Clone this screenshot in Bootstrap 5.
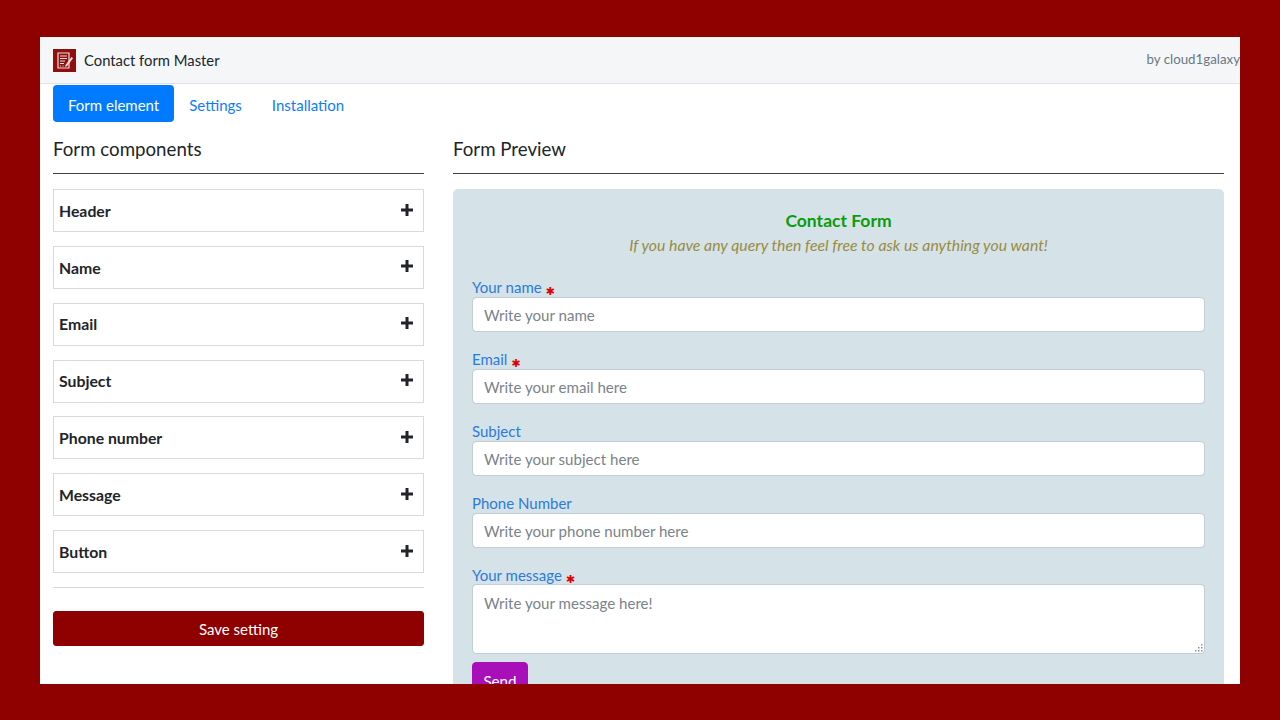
<!DOCTYPE html>
<html lang="en">
<head>
  <meta charset="UTF-8" />
  <meta name="viewport" content="width=device-width, initial-scale=1.0"/>
  <title>Contact form Master</title>
  <link href="https://cdn.jsdelivr.net/npm/bootstrap@5.3.0/dist/css/bootstrap.min.css" rel="stylesheet" />
  <style>
    html, body {
      height: 720px;
      overflow: hidden;
    }
    body {
      background-color: #8f0000;
      padding: 37px 40px 36px;
      font-family: "Lato", "Noto Sans", "Liberation Sans", sans-serif;
      font-size: 16px;
      color: #212529;
    }
    .app-frame {
      background-color: #fff;
      height: 647px;
      overflow: hidden;
    }
    .app-header {
      height: 47px;
      padding: 0 0 0 13px;
      background-color: #f4f6f8;
      border-bottom: 1px solid #dfe3e8;
    }
    .app-title {
      font-size: 14.8px;
    }
    .app-by {
      font-size: 13.3px;
      color: #6b7785;
    }
    .tab-row {
      margin: 1px 13px 0;
    }
    .tab-row .nav-link {
      height: 37px;
      padding: 0 15px;
      line-height: 40px;
      font-size: 15px;
      color: #0d7cff;
      border-radius: 4px;
    }
    .tab-row .nav-link.active {
      background-color: #007bff;
      color: #fff;
    }
    .work-area {
      padding: 0 16px 0 13px;
      gap: 29px;
    }
    .left-col {
      width: 371px;
      flex: none;
    }
    .right-col {
      flex: 1;
    }
    .col-title {
      font-size: 18.7px;
      font-weight: 400;
      line-height: 28px;
      margin: 13px 0 10px;
    }
    .col-rule {
      margin: 0 0 15px;
      border-top: 1px solid #000;
      opacity: .75;
    }
    .comp-item {
      height: 43px;
      margin-bottom: 13.85px;
      padding: 0 10px 0 5px;
      border: 1px solid #d9d9d9;
      font-weight: 700;
      font-size: 15.8px;
    }
    .comp-plus {
      width: 12px;
      height: 12px;
      margin-top: -2px;
    }
    .soft-rule {
      margin: 0 0 23px;
      border-top: 1px solid #d8d8d8;
      opacity: 1;
    }
    .save-btn {
      height: 35px;
      padding: 2px 0 0;
      background-color: #8f0000;
      border-color: #8f0000;
      color: #fff;
      font-size: 15px;
      border-radius: 3px;
    }
    .preview-panel {
      padding: 20px 19px 30px;
      background-color: #d5e2e7;
      border-radius: 5px 5px 0 0;
    }
    .preview-title {
      font-size: 17.5px;
      font-weight: 700;
      color: #0a9c0a;
      line-height: 24px;
      margin: 0;
    }
    .preview-sub {
      font-size: 15.8px;
      font-style: italic;
      color: #998c43;
      line-height: 24px;
      margin: 0 0 19px;
    }
    .field-label {
      display: block;
      height: 21px;
      margin: 0;
      line-height: 22px;
      font-size: 15px;
      color: #2b7bdc;
    }
    .label-tight {
      height: 20px;
    }
    .req-mark {
      color: #e10000;
      font-family: "DejaVu Sans", sans-serif;
      font-size: 11px;
      vertical-align: -2px;
    }
    .field-input {
      height: 35px;
      margin-bottom: 16px;
      padding: 0 11px;
      font-size: 15.1px;
      border-radius: 4px;
      border-color: #c2ced6;
    }
    .field-input::placeholder,
    .field-area::placeholder {
      color: #7b838a;
    }
    .area-wrap {
      margin-bottom: 8px;
    }
    textarea.field-area {
      height: 70px;
      min-height: 70px;
      padding: 7px 11px;
      font-size: 15.1px;
      border-radius: 4px;
      border-color: #c2ced6;
      resize: none;
    }
    .area-grip {
      position: absolute;
      right: 2px;
      bottom: 2px;
      width: 9px;
      height: 9px;
    }
    .send-btn {
      height: 38px;
      width: 56px;
      padding: 0;
      background-color: #a90fb8;
      border-color: #a90fb8;
      color: #fff;
      font-size: 15.2px;
      border-radius: 4px;
    }
  </style>
</head>
<body>
  <div class="app-frame">

    <!-- Header -->
    <div class="app-header d-flex align-items-center justify-content-between">
      <div class="d-flex align-items-center gap-2">
        <svg width="23" height="23" viewBox="0 0 23 23">
          <rect width="23" height="23" fill="#8f0f0f"/>
          <path d="M5 4h11v15H5z" fill="none" stroke="#f3dada" stroke-width="1.2"/>
          <path d="M7 7h7M7 9.500h7M7 12h5M7 14.500h4" stroke="#f3dada" stroke-width="1.200"/>
          <path d="M7 17h1M9.500 17h1" stroke="#f3dada" stroke-width="1"/>
          <path d="M12.500 16l6-8 1.500 1.200-6 8-2 .6z" fill="#f3dada"/>
        </svg>
        <span class="app-title">Contact form Master</span>
      </div>
      <span class="app-by">by cloud1galaxy</span>
    </div>

    <!-- Tabs -->
    <ul class="nav nav-pills tab-row">
      <li class="nav-item"><a class="nav-link active" href="#">Form element</a></li>
      <li class="nav-item"><a class="nav-link" href="#">Settings</a></li>
      <li class="nav-item"><a class="nav-link" href="#">Installation</a></li>
    </ul>

    <div class="work-area d-flex">

      <!-- Form components -->
      <div class="left-col">
        <h5 class="col-title">Form components</h5>
        <hr class="col-rule">
        <div id="comp-list"></div>
        <hr class="soft-rule">
        <button class="btn save-btn w-100" type="button">Save setting</button>
      </div>

      <!-- Form preview -->
      <div class="right-col">
        <h5 class="col-title">Form Preview</h5>
        <hr class="col-rule">
        <div class="preview-panel">
          <h5 class="preview-title text-center">Contact Form</h5>
          <p class="preview-sub text-center">If you have any query then feel free to ask us anything you want!</p>
          <form>
            <label class="field-label">Your name <span class="req-mark">&#10033;</span></label>
            <input type="text" class="form-control field-input" placeholder="Write your name">
            <label class="field-label">Email <span class="req-mark">&#10033;</span></label>
            <input type="text" class="form-control field-input" placeholder="Write your email here">
            <label class="field-label">Subject</label>
            <input type="text" class="form-control field-input" placeholder="Write your subject here">
            <label class="field-label">Phone Number</label>
            <input type="text" class="form-control field-input" placeholder="Write your phone number here">
            <label class="field-label label-tight">Your message <span class="req-mark">&#10033;</span></label>
            <div class="area-wrap position-relative">
              <textarea class="form-control field-area" placeholder="Write your message here!"></textarea>
              <svg class="area-grip" viewBox="0 0 9 9" fill="#8d9499">
                <rect x="7" y="1" width="1.500" height="1.500"/>
                <rect x="7" y="4" width="1.500" height="1.500"/><rect x="4" y="4" width="1.500" height="1.500"/>
                <rect x="7" y="7" width="1.500" height="1.500"/><rect x="4" y="7" width="1.500" height="1.500"/><rect x="1" y="7" width="1.500" height="1.500"/>
              </svg>
            </div>
            <button class="btn send-btn" type="button">Send</button>
          </form>
        </div>
      </div>
    </div>
  </div>

  <script>
    const components = ['Header', 'Name', 'Email', 'Subject', 'Phone number', 'Message', 'Button'];
    document.getElementById('comp-list').innerHTML = components.map(name => `
      <div class="comp-item d-flex align-items-center justify-content-between">
        <span>${name}</span>
        <svg class="comp-plus" viewBox="0 0 12 12"><path d="M6 0v12M0 6h12" stroke="#212529" stroke-width="3"/></svg>
      </div>`).join('');
  </script>
  <script src="https://cdn.jsdelivr.net/npm/bootstrap@5.3.0/dist/js/bootstrap.bundle.min.js"></script>
</body>
</html>
